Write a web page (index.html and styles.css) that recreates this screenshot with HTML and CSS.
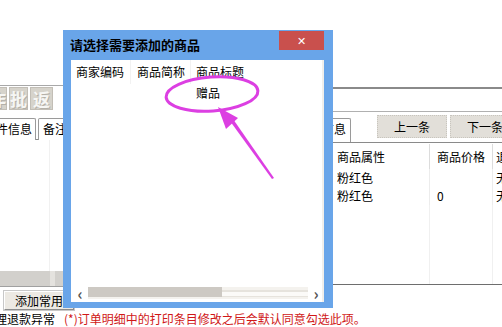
FILE: index.html
```html
<!DOCTYPE html>
<html lang="zh">
<head>
    <meta charset="UTF-8">
    <title>添加商品</title>
    <link rel="stylesheet" href="styles.css">
</head>
<body>
<div class="app">
    <div class="main">
        <div class="left">
            <div class="toolbar">
                <span class="tb-btn">作</span>
                <span class="tb-btn">批</span>
                <span class="tb-btn">返</span>
            </div>
            <div class="tabs">
                <span class="tab tab-first">附件信息</span>
                <span class="tab">备注</span>
            </div>
            <div class="grid-area"></div>
            <div class="hbar"><span class="hbar-light"></span></div>
            <div class="btn-row">
                <span class="btn">添加常用</span>
            </div>
        </div>
        <div class="right">
            <div class="strip"></div>
            <div class="nav-row">
                <span class="tab tab-cut">信息</span>
                <span class="btn nav-btn">上一条</span>
                <span class="btn nav-btn">下一条</span>
            </div>
            <div class="table">
                <div class="t-row t-head">
                    <span class="t-c1">商品属性</span>
                    <span class="t-c2">商品价格</span>
                    <span class="t-c3">退</span>
                </div>
                <div class="t-row">
                    <span class="t-c1">粉红色</span>
                    <span class="t-c2"></span>
                    <span class="t-c3">无</span>
                </div>
                <div class="t-row">
                    <span class="t-c1">粉红色</span>
                    <span class="t-c2">0</span>
                    <span class="t-c3">无</span>
                </div>
                <div class="t-fill"></div>
            </div>
        </div>
    </div>
    <div class="status">
        <span class="status-text">理退款异常</span>
        <span class="status-note">(*)订单明细中的打印条目修改之后会默认同意勾选此项。</span>
    </div>
</div>

<!-- 选择商品弹窗 -->
<div class="dialog">
    <div class="dlg-title">
        <span>请选择需要添加的商品</span>
        <span class="dlg-close">✕</span>
    </div>
    <div class="dlg-client">
        <div class="list-row list-head">
            <span class="c1">商家编码</span>
            <span class="c2">商品简称</span>
            <span class="c3">商品标题</span>
        </div>
        <div class="list-row">
            <span class="c1"></span>
            <span class="c2"></span>
            <span class="c3">赠品</span>
        </div>
        <div class="list-fill"></div>
        <div class="hscroll">
            <span class="arrow">‹</span>
            <span class="track"><span class="thumb"></span></span>
            <span class="arrow">›</span>
        </div>
    </div>
</div>

<svg class="mark" width="502" height="327" viewBox="0 0 502 327">
    <ellipse cx="212" cy="94" rx="46" ry="17" transform="rotate(-4 212 94)" fill="none" stroke="#dc3fe2" stroke-width="3"/>
    <polygon points="218,107 238,118 226,129" fill="#dc3fe2"/>
    <polygon points="230,121 233,119 274,178 272,179" fill="#dc3fe2"/>
</svg>
</body>
</html>
```

FILE: styles.css
```css
body {
    margin: 0;
    width: 502px;
    height: 327px;
    overflow: hidden;
    position: relative;
    background: #fff;
    font-family: "Noto Sans CJK SC", "Liberation Sans", sans-serif;
    font-size: 12px;
    color: #000;
}
.app { display: flex; flex-direction: column; height: 327px; }
.main { display: flex; height: 311px; }

/* 左侧 */
.left { width: 333px; flex-shrink: 0; display: flex; flex-direction: column; padding-top: 85px; box-sizing: border-box; }
.toolbar {
    border-top: 1px solid #a8a8a8;
    padding-top: 1px;
    display: flex;
    gap: 2px;
    margin-left: -12px;
    height: 24px;
}
.tb-btn {
    width: 19px;
    height: 23px;
    margin-right: 0;
    background: #d6d3cb;
    border: 1px solid #c2beb6;
    box-sizing: border-box;
    color: #f6f6f4;
    font-size: 17px;
    font-weight: bold;
    line-height: 21px;
    text-align: center;
    text-shadow: 1px 1px 0 #b4b0a8;
}
.tb-btn:nth-child(3) { width: 23px; }
.tabs {
    display: flex;
    gap: 2px;
    margin-top: 6px;
    margin-left: -21px;
    border-bottom: 1px solid #8a8a8a;
    height: 23px;
    box-sizing: border-box;
}
.tab {
    border: 1px solid #9a9a9a;
    border-bottom: none;
    border-radius: 2px 2px 0 0;
    padding: 0 4px 0 4px;
    line-height: 20px;
    height: 21px;
    margin-top: 1px;
    background: #fff;
}
.tab-first { padding-right: 3px; }
.grid-area {
    flex: 1;
    background: linear-gradient(90deg, transparent 49px, #f1f1f1 49px, #f1f1f1 50px, transparent 50px);
}
.hbar {
    height: 15px;
    background: #d2d0cc;
    border-bottom: 1px solid #a0a0a0;
    position: relative;
}
.hbar-light { position: absolute; left: 50px; top: 0; width: 5px; height: 15px; background: #e4e2de; }
.btn-row { padding: 4px 0 0 4px; height: 20px; }
.btn {
    display: inline-block;
    background: #ece9e3;
    border: 1px solid #9e9e9e;
    border-color: #fff #8c8c8c #8c8c8c #fff;
    outline: 1px solid #c8c8c8;
    line-height: 17px;
    padding: 0 10px;
}

/* 右侧 */
.right { flex: 1; min-width: 0; padding-top: 87px; display: flex; flex-direction: column; }
.strip { height: 22px; border-top: 2px solid #8a8a8a; border-bottom: 1px solid #b0b0b0; }
.nav-row { display: flex; align-items: flex-start; height: 31px; border-bottom: 1px solid #8a8a8a; box-sizing: border-box; padding-top: 3px; white-space: nowrap; }
.tab-cut { margin-left: -16px; padding-right: 4px; margin-top: 3px; height: 23px; flex-shrink: 0; }
.nav-btn {
    flex-shrink: 0;
    background: #e2dfd9;
    border: 1px dotted #c8c5be;
    outline: none;
    width: 68px;
    height: 21px;
    padding: 0;
    text-align: center;
    line-height: 21px;
    margin-left: 26px;
}
.nav-btn + .nav-btn { margin-left: 3px; }
.table { flex: 1; display: flex; flex-direction: column; border-bottom: 1px solid #6e6e6e; margin-bottom: 26px; }
.t-row { display: flex; height: 18px; line-height: 18px; white-space: nowrap; }
.t-head { height: 25px; line-height: 25px; margin-top: 1px; }
.t-c1 { width: 97px; flex-shrink: 0; padding-left: 4px; box-sizing: border-box; border-right: 1px solid #ececec; }
.t-c2 { width: 63px; flex-shrink: 0; padding-left: 7px; box-sizing: border-box; border-right: 1px solid #ececec; }
.t-c3 { padding-left: 3px; }
.t-head .t-c1, .t-head .t-c2 { border-right-color: #dcdcdc; }
.t-fill {
    flex: 1;
    background:
        linear-gradient(90deg, transparent 96px, #f0f0f0 96px, #f0f0f0 97px, transparent 97px, transparent 159px, #f0f0f0 159px, #f0f0f0 160px, transparent 160px);
}

.status { display: flex; height: 16px; line-height: 16px; }
.status-text { margin-left: -5px; width: 69px; }
.status-note { color: #d01818; }

/* 弹窗 */
.dialog {
    position: absolute;
    left: 63px;
    top: 30px;
    width: 270px;
    height: 278px;
    background: #69a5e9;
    display: flex;
    flex-direction: column;
    box-sizing: border-box;
    padding: 0 9px 6px 8px;
}
.dlg-title {
    height: 30px;
    line-height: 30px;
    font-size: 13px;
    font-weight: bold;
    margin-left: -1px;
    color: #000;
}
.dlg-close {
    position: absolute;
    top: 1px;
    right: 9px;
    width: 45px;
    height: 19px;
    background: #c9504d;
    color: #fff;
    font-size: 11px;
    font-weight: normal;
    line-height: 19px;
    text-align: center;
}
.dlg-client {
    flex: 1;
    background: #fff;
    display: flex;
    flex-direction: column;
    border-right: 2px solid #f1efeb;
}
.list-row { display: flex; height: 17px; line-height: 17px; }
.list-head { height: 24px; line-height: 24px; }
.list-row span { width: 60px; padding-left: 5px; box-sizing: border-box; }
.list-head .c1, .list-head .c2 { border-right: 1px solid #f2f2f2; }
.list-row .c2 { padding-left: 6px; }
.list-row .c3 { width: auto; }
.list-fill { flex: 1; }
.hscroll {
    display: flex;
    align-items: center;
    height: 14px;
    margin: 0 0 2px 3px;
    color: #555;
}
.arrow { width: 12px; font-size: 16px; font-weight: bold; line-height: 12px; text-align: center; }
.track {
    flex: 1;
    height: 12px;
    margin: 0 2px;
    background: linear-gradient(#f4f2ee 0, #f4f2ee 3px, #e6e3dd 3px, #e6e3dd 5px, #fbfaf8 5px, #fbfaf8 9px, #e6e3dd 9px, #e6e3dd 10px, #f4f2ee 10px);
}
.thumb { display: block; width: 134px; height: 10px; background: #cdc9c3; }

.mark { position: absolute; left: 0; top: 0; pointer-events: none; }
```
